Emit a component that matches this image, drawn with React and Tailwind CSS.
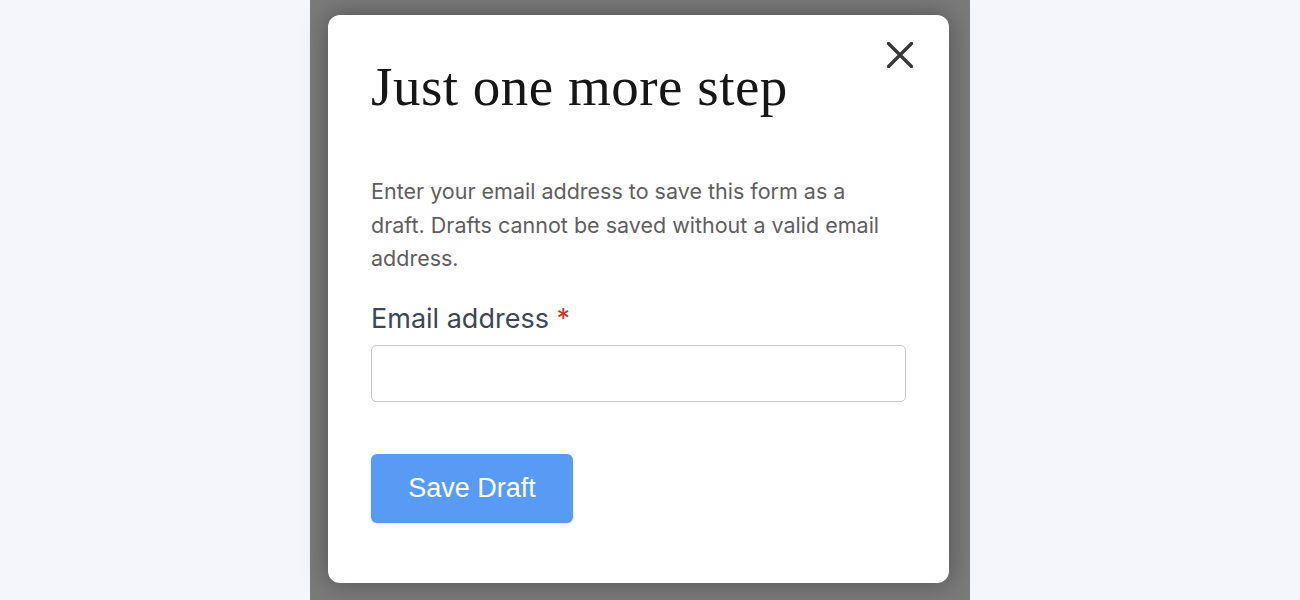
import React from "react";

const CloseIcon = () => (
  <svg width="26" height="26" viewBox="0 0 26 26" fill="none">
    <path
      d="M1.5 1.5L24.5 24.5M24.5 1.5L1.5 24.5"
      stroke="#383838"
      strokeWidth="3.4"
      strokeLinecap="round"
    />
  </svg>
);

export default function App() {
  return (
    <div className="flex h-[600px] w-full bg-[#f5f6fb] pl-[310px]">
      <div className="h-full w-[660px] bg-[#7a7a7a] pt-[15px] pl-[18px]">
        <div className="relative h-[568px] w-[621px] rounded-[12px] bg-white px-[43px] pt-[40px] shadow-[0_0_24px_rgba(0,0,0,0.35)]">
          <button className="absolute right-[36px] top-[27px]">
            <CloseIcon />
          </button>

          <h1 className="font-['Liberation_Serif',serif] text-[55px] leading-[64px] tracking-[0.5px] text-[#161616]">
            Just one more step
          </h1>

          <p className="mt-[56px] pr-[10px] font-['Inter',sans-serif] text-[21.5px] leading-[33.5px] text-[#5e5e5e]">
            Enter your email address to save this form as a draft. Drafts
            cannot be saved without a valid email address.
          </p>

          <label className="mt-[26px] block font-['Inter',sans-serif] text-[27px] leading-[34px] text-[#3c4658]">
            Email address <span className="text-[#c0392b]">*</span>
          </label>

          <input
            type="email"
            className="mt-[9px] block h-[57px] w-full rounded-[5px] border border-[#c8c8cc] bg-white px-3 outline-none"
          />

          <button className="mt-[52px] h-[69px] w-[202px] rounded-[6px] bg-[#589bf5] font-['Liberation_Sans',sans-serif] text-[27px] text-white shadow-[0_1px_3px_rgba(0,0,0,0.12)]">
            Save Draft
          </button>
        </div>
      </div>
    </div>
  );
}
